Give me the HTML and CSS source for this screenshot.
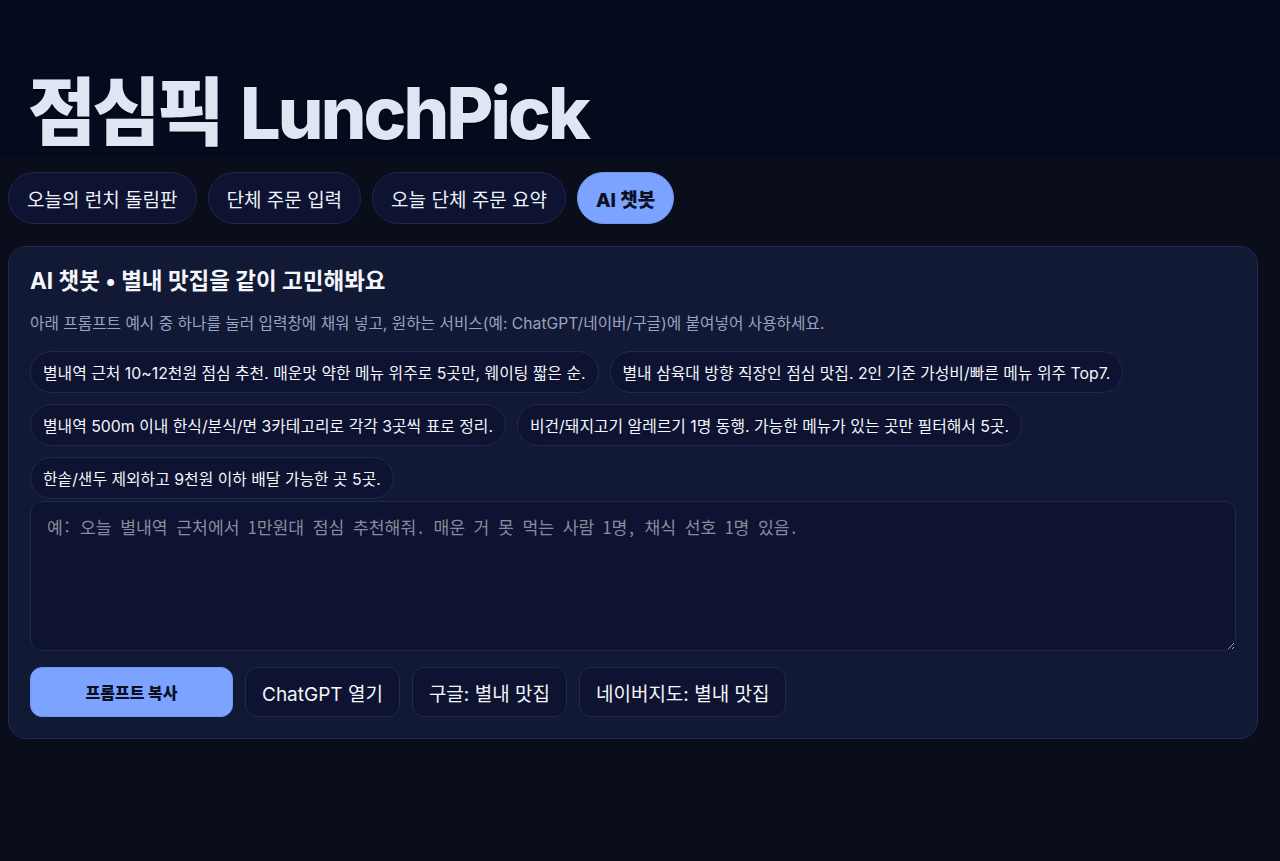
FILE: index.html
```html
<!DOCTYPE html>
<html lang="ko">
<head>
<meta charset="utf-8">
<title>점심픽 LunchPick</title>
<link rel="stylesheet" href="styles.css">
</head>
<body>
<header class="site-header">
  <h1 class="brand"><span class="brand-ko">점심픽</span> LunchPick</h1>
</header>
<main class="main">
  <nav class="tabs">
    <button class="tab">오늘의 런치 돌림판</button>
    <button class="tab">단체 주문 입력</button>
    <button class="tab">오늘 단체 주문 요약</button>
    <button class="tab tab-active">AI 챗봇</button>
  </nav>
  <section class="card">
    <h2 class="card-title">AI 챗봇 • 별내 맛집을 같이 고민해봐요</h2>
    <p class="card-desc">아래 프롬프트 예시 중 하나를 눌러 입력창에 채워 넣고, 원하는 서비스(예: ChatGPT/네이버/구글)에 붙여넣어 사용하세요.</p>
    <div class="chips">
      <button class="chip">별내역 근처 10~12천원 점심 추천. 매운맛 약한 메뉴 위주로 5곳만, 웨이팅 짧은 순.</button>
      <button class="chip">별내 삼육대 방향 직장인 점심 맛집. 2인 기준 가성비/빠른 메뉴 위주 Top7.</button>
      <button class="chip">별내역 500m 이내 한식/분식/면 3카테고리로 각각 3곳씩 표로 정리.</button>
      <button class="chip">비건/돼지고기 알레르기 1명 동행. 가능한 메뉴가 있는 곳만 필터해서 5곳.</button>
      <button class="chip">한솥/샌두 제외하고 9천원 이하 배달 가능한 곳 5곳.</button>
    </div>
    <textarea class="prompt" placeholder="예: 오늘 별내역 근처에서 1만원대 점심 추천해줘. 매운 거 못 먹는 사람 1명, 채식 선호 1명 있음."></textarea>
    <div class="actions">
      <button class="btn btn-primary">프롬프트 복사</button>
      <a class="btn" href="#">ChatGPT 열기</a>
      <a class="btn" href="#">구글: 별내 맛집</a>
      <a class="btn" href="#">네이버지도: 별내 맛집</a>
    </div>
  </section>
</main>
</body>
</html>
```
FILE: styles.css
```css
* { box-sizing: border-box; }

html, body {
  margin: 0;
  padding: 0;
}

body {
  background: #0a0e1b;
  color: #eef2fa;
  font-family: "Inter", "Noto Sans CJK KR", sans-serif;
  min-height: 861px;
}

.site-header {
  background: #060a1e;
  padding: 75px 28px 8px;
}

.brand {
  margin: 0;
  font-size: 72px;
  line-height: 75px;
  font-weight: 800;
  letter-spacing: -0.04em;
  color: #dfe6f3;
  text-shadow: 0 2px 0 rgba(0, 0, 0, 0.55), 0 0 2px rgba(0, 0, 0, 0.6);
}

.brand-ko {
  font-family: "Noto Sans CJK KR", sans-serif;
  font-size: 74px;
  line-height: 0;
  font-weight: 900;
  letter-spacing: -0.05em;
  margin-right: 6px;
}

.main {
  padding: 14px 8px 0;
}

.tabs {
  display: flex;
  gap: 11px;
  margin-bottom: 22px;
}

.tab {
  height: 52px;
  padding: 0 18px;
  border-radius: 26px;
  border: 1px solid #1d2750;
  background: #0d1330;
  color: #eef2fa;
  font-family: inherit;
  font-size: 19px;
  font-weight: 400;
}

.tab-active {
  background: #7ba3ff;
  border-color: #6f97f5;
  color: #0a1022;
  font-weight: 800;
}

.card {
  width: 1250px;
  background: #111934;
  border: 1px solid #1f2a52;
  border-radius: 18px;
  padding: 21px 21px 21px;
}

.card-title {
  margin: 0;
  font-size: 22.5px;
  line-height: 26px;
  font-weight: 700;
  color: #f4f6fb;
}

.card-desc {
  margin: 19px 0 16px;
  font-size: 15.7px;
  line-height: 22px;
  color: #9aa3c2;
}

.chips {
  display: flex;
  flex-wrap: wrap;
  gap: 11px;
}

.chip {
  height: 42px;
  padding: 0 12px;
  border-radius: 21px;
  border: 1px solid #1f2a52;
  background: #0d1330;
  color: #f4f6fb;
  font-family: inherit;
  font-size: 15.85px;
  font-weight: 400;
}

.prompt {
  display: block;
  width: 100%;
  height: 150px;
  margin-top: 2px;
  padding: 14px 16px;
  border-radius: 12px;
  border: 1px solid #1f2a52;
  background: #0d1330;
  color: #e8ecf5;
  font-family: "Noto Sans Mono CJK KR", "DejaVu Sans Mono", monospace;
  font-size: 17.2px;
  line-height: 22px;
  resize: vertical;
}

.prompt::placeholder {
  color: #878c9c;
}

.actions {
  display: flex;
  gap: 12px;
  margin-top: 16px;
}

.btn {
  display: inline-flex;
  align-items: center;
  justify-content: center;
  height: 50px;
  padding: 0 16px;
  border-radius: 12px;
  border: 1px solid #1f2a52;
  background: #0d1330;
  color: #f4f6fb;
  font-family: inherit;
  font-size: 19px;
  font-weight: 400;
  text-decoration: none;
}

.btn-primary {
  width: 203px;
  background: #7ba3ff;
  border-color: #6f97f5;
  color: #0a1022;
  font-size: 16px;
  font-weight: 800;
}
```
